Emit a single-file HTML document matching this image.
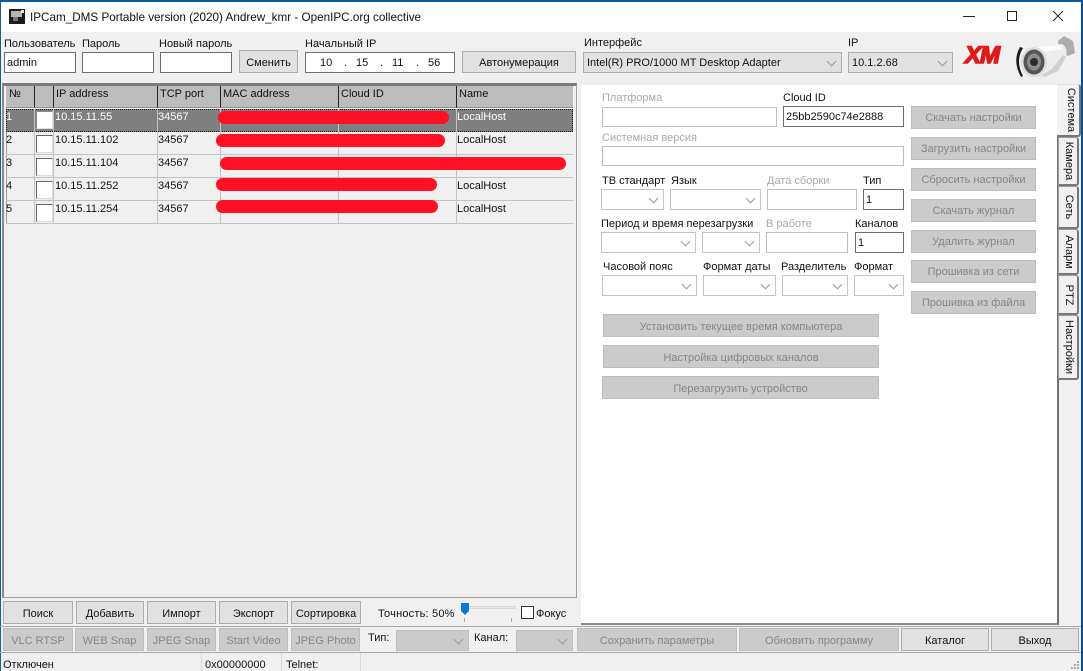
<!DOCTYPE html>
<html lang="ru"><head><meta charset="utf-8"><title>IPCam_DMS</title>
<style>
html,body{margin:0;padding:0;width:1083px;height:671px;overflow:hidden;background:#f0f0f0}
body{position:relative;font:11px/15px "Liberation Sans",sans-serif;color:#111}
div,span.a{position:absolute;box-sizing:border-box;white-space:nowrap}
.l{height:16px;padding-top:1px}
.g{color:#a9a9a9}
.i{background:#fff;border:1px solid #bdbdbd;height:22px}
.d{border-color:#6f6f6f;padding:3px 2px;line-height:14px;color:#111}
.b{background:#e1e1e1;border:1px solid #adadad;text-align:center;line-height:23px;height:23px;color:#111}
.m{line-height:25px}
.x{background:#cbcbcb;border-color:#bdbdbd;color:#858585}
.c{background:#fff;border:1px solid #c4c4c4;height:22px}
.c::after{content:"";position:absolute;right:6px;top:5px;width:6px;height:6px;border-right:1px solid #999;border-bottom:1px solid #999;transform:rotate(45deg)}
.cg{background:#e1e1e1;border-color:#adadad;padding:3px 3px;line-height:14px}
.cx{background:#cbcbcb;border-color:#bdbdbd}
.h{background:#bdbdbd;height:22px;top:86px;padding:1px 2px 0;border-right:1px solid #222;border-bottom:1px solid #8f8f8f}
.r{left:6px;width:567px;height:23px;border-bottom:1px solid #c3c3c3}
.t{height:15px}
.s{color:#fff}
.k{background:#fff;left:36px;width:17px;height:18px;border:1px solid #dcdcdc;border-top:1px solid #666;border-left:1px solid #666}
.p{background:#ff1022;border-radius:7px;height:13px}
.tab{left:1058px;width:21px;background:#f0f0f0;border:1px solid #9a9a9a;border-radius:0 3px 3px 0;border-right:2px solid #777;border-bottom:2px solid #777}
.tab span{position:absolute;left:3px;top:50%;writing-mode:vertical-rl;transform:translateY(-50%);line-height:13px;color:#111}
</style></head><body>
<!-- window frame -->
<div style="left:0;top:0;width:1083px;height:2px;background:#0d5a9a"></div>
<div style="left:0;top:2px;width:1083px;height:30px;background:#fff"></div>
<div style="left:0;top:0;width:1px;height:671px;background:#1c5f86"></div>
<div style="left:1081px;top:0;width:2px;height:671px;background:#0b4f8f"></div>
<!-- title -->
<svg style="position:absolute;left:9px;top:9px" width="16" height="15" viewBox="0 0 16 15"><rect width="16" height="15" fill="#1c1c1c"/><rect x="2" y="2" width="11" height="6" fill="#b5b5b5"/><rect x="4" y="8" width="5" height="4" fill="#777"/><rect x="12" y="1" width="3" height="3" fill="#e6e6e6"/></svg>
<div class="l" style="left:30px;top:9px;font-size:11.7px;line-height:15px;color:#111">IPCam_DMS Portable version (2020) Andrew_kmr - OpenIPC.org collective</div>
<svg style="position:absolute;left:960px;top:8px" width="115" height="16" viewBox="0 0 115 16" fill="none" stroke="#222"><path d="M3 8.5H15"/><rect x="47.5" y="3.5" width="9" height="9"/><path d="M93 3l10 10M103 3L93 13"/></svg>

<!-- top controls -->
<div class="l" style="left:4px;top:36px">Пользователь</div>
<div class="l" style="left:82px;top:36px">Пароль</div>
<div class="l" style="left:159px;top:36px">Новый пароль</div>
<div class="l" style="left:305px;top:36px">Начальный IP</div>
<div class="l" style="left:584px;top:35px">Интерфейс</div>
<div class="l" style="left:848px;top:35px">IP</div>
<div class="i d" style="left:4px;top:52px;width:72px;height:21px">admin</div>
<div class="i d" style="left:82px;top:52px;width:72px;height:21px"></div>
<div class="i d" style="left:160px;top:52px;width:72px;height:21px"></div>
<div class="b m" style="left:239px;top:50px;width:59px">Сменить</div>
<div class="i d" style="left:305px;top:52px;width:150px;height:21px"></div>
<div class="l" style="left:320px;top:55px">10</div><div class="l" style="left:344px;top:55px">.</div>
<div class="l" style="left:356px;top:55px">15</div><div class="l" style="left:380px;top:55px">.</div>
<div class="l" style="left:392px;top:55px">11</div><div class="l" style="left:416px;top:55px">.</div>
<div class="l" style="left:428px;top:55px">56</div>
<div class="b" style="left:462px;top:51px;width:114px;height:22px">Автонумерация</div>
<div class="c cg" style="left:583px;top:52px;width:259px;height:21px">Intel(R) PRO/1000 MT Desktop Adapter</div>
<div class="c cg" style="left:848px;top:52px;width:105px;height:21px">10.1.2.68</div>
<!-- logo -->
<div style="left:965px;top:44px;width:48px;height:23px;font:italic 900 24px/23px 'Liberation Sans',sans-serif;color:#e01a1a;-webkit-text-stroke:1.6px #e01a1a;letter-spacing:-1px">XM</div>
<svg style="position:absolute;left:1014px;top:33px" width="62" height="50" viewBox="0 0 62 50"><path d="M44 8l6-5 9 5 2 12-7 3-8-4z" fill="#adadad"/><path d="M18 14L48 11Q54 14 52 24L41 41Q32 47 20 45Q8 40 7 28Q8 18 18 14z" fill="#ececec"/><path d="M22 14L46 12 49 16 30 19z" fill="#fbfbfb"/><path d="M30 44L44 38 52 24 49 22 38 36 28 42z" fill="#cfcfcf"/><path d="M9 15Q1 28 9 43L7 44Q-2 28 6 14z" fill="#1d1d1d"/><ellipse cx="20" cy="29" rx="13" ry="15" fill="#dcdcdc"/><ellipse cx="20" cy="29" rx="10.500" ry="12.500" fill="#555"/><ellipse cx="20" cy="29" rx="7" ry="8.500" fill="#8d8d8d"/><circle cx="20" cy="29" r="4" fill="#2b2b2b"/></svg>

<!-- table frame -->
<div style="left:2px;top:83px;width:575px;height:515px;background:#f0f0f0;border:1px solid #a0a0a0;border-top:3px solid #7a7a7a;border-left:2px solid #8a8a8a"></div>
<div style="left:6px;top:86px;width:1px;height:137px;background:#9a9a9a"></div>
<div class="h" style="left:6px;width:29px;padding-left:3px">№</div>
<div class="h" style="left:35px;width:19px"></div>
<div class="h" style="left:54px;width:104px">IP address</div>
<div class="h" style="left:158px;width:63px">TCP port</div>
<div class="h" style="left:221px;width:118px">MAC address</div>
<div class="h" style="left:339px;width:118px">Cloud ID</div>
<div class="h" style="left:457px;width:116px;border-right:0">Name</div>
<!-- rows -->
<div class="r" style="top:109px;background:#7f7f7f;border:1px dotted #111"></div>
<div class="r" style="top:132px"></div>
<div class="r" style="top:155px"></div>
<div class="r" style="top:178px"></div>
<div class="r" style="top:201px"></div>
<div style="left:34px;top:109px;width:1px;height:115px;background:#c3c3c3"></div>
<div style="left:53px;top:109px;width:1px;height:115px;background:#c3c3c3"></div>
<div style="left:157px;top:109px;width:1px;height:115px;background:#c3c3c3"></div>
<div style="left:220px;top:109px;width:1px;height:115px;background:#c3c3c3"></div>
<div style="left:338px;top:109px;width:1px;height:115px;background:#c3c3c3"></div>
<div style="left:456px;top:109px;width:1px;height:115px;background:#c3c3c3"></div>
<div class="k" style="top:111px;border-color:#8a8a8a #e0e0e0 #e0e0e0 #8a8a8a"></div><div class="k" style="top:135px"></div><div class="k" style="top:158px"></div><div class="k" style="top:181px"></div><div class="k" style="top:204px"></div>

<div class="t s" style="left:6px;top:110px">1</div><div class="t s" style="left:55px;top:110px">10.15.11.55</div><div class="t s" style="left:158px;top:110px">34567</div><div class="t s" style="left:457px;top:110px">LocalHost</div>
<div class="t" style="left:6px;top:133px">2</div><div class="t" style="left:55px;top:133px">10.15.11.102</div><div class="t" style="left:158px;top:133px">34567</div><div class="t" style="left:457px;top:133px">LocalHost</div>
<div class="t" style="left:6px;top:156px">3</div><div class="t" style="left:55px;top:156px">10.15.11.104</div><div class="t" style="left:158px;top:156px">34567</div>
<div class="t" style="left:6px;top:179px">4</div><div class="t" style="left:55px;top:179px">10.15.11.252</div><div class="t" style="left:158px;top:179px">34567</div><div class="t" style="left:457px;top:179px">LocalHost</div>
<div class="t" style="left:6px;top:202px">5</div><div class="t" style="left:55px;top:202px">10.15.11.254</div><div class="t" style="left:158px;top:202px">34567</div><div class="t" style="left:457px;top:202px">LocalHost</div>
<div class="p" style="left:218px;top:111px;width:231px"></div>
<div class="p" style="left:216px;top:134px;width:229px"></div>
<div class="p" style="left:220px;top:157px;width:346px"></div>
<div class="p" style="left:216px;top:178px;width:221px"></div>
<div class="p" style="left:216px;top:200px;width:222px"></div>

<!-- right panel -->
<div style="left:581px;top:85px;width:478px;height:540px;background:#fff;border-right:2px solid #6f6f6f;border-bottom:2px solid #8a8a8a"></div>
<div class="l g" style="left:602px;top:90px">Платформа</div>
<div class="i" style="left:602px;top:107px;width:175px;height:20px"></div>
<div class="l" style="left:783px;top:90px">Cloud ID</div>
<div class="i d" style="left:783px;top:106px;width:121px;height:21px">25bb2590c74e2888</div>
<div class="l g" style="left:602px;top:130px">Системная версия</div>
<div class="i" style="left:602px;top:146px;width:302px;height:20px"></div>

<div class="l" style="left:602px;top:173px">ТВ стандарт</div>
<div class="l" style="left:671px;top:173px">Язык</div>
<div class="l g" style="left:767px;top:173px">Дата сборки</div>
<div class="l" style="left:863px;top:173px">Тип</div>
<div class="c" style="left:601px;top:189px;width:63px;height:21px"></div>
<div class="c" style="left:670px;top:189px;width:91px;height:21px"></div>
<div class="i" style="left:767px;top:189px;width:90px;height:21px"></div>
<div class="i d" style="left:863px;top:189px;width:41px;height:21px">1</div>

<div class="l" style="left:601px;top:216px">Период и время перезагрузки</div>
<div class="l g" style="left:766px;top:216px">В работе</div>
<div class="l" style="left:855px;top:216px">Каналов</div>
<div class="c" style="left:601px;top:232px;width:95px;height:21px"></div>
<div class="c" style="left:702px;top:232px;width:58px;height:21px"></div>
<div class="i" style="left:766px;top:232px;width:82px;height:21px"></div>
<div class="i d" style="left:855px;top:232px;width:49px;height:21px">1</div>

<div class="l" style="left:603px;top:259px">Часовой пояс</div>
<div class="l" style="left:703px;top:259px">Формат даты</div>
<div class="l" style="left:781px;top:259px">Разделитель</div>
<div class="l" style="left:854px;top:259px">Формат</div>
<div class="c" style="left:602px;top:275px;width:95px;height:21px"></div>
<div class="c" style="left:703px;top:275px;width:73px;height:21px"></div>
<div class="c" style="left:782px;top:275px;width:66px;height:21px"></div>
<div class="c" style="left:854px;top:275px;width:50px;height:21px"></div>

<div class="b x" style="left:911px;top:106px;width:125px">Скачать настройки</div>
<div class="b x" style="left:911px;top:137px;width:125px">Загрузить настройки</div>
<div class="b x" style="left:911px;top:168px;width:125px">Сбросить настройки</div>
<div class="b x" style="left:911px;top:199px;width:125px">Скачать журнал</div>
<div class="b x" style="left:911px;top:230px;width:125px">Удалить журнал</div>
<div class="b x" style="left:911px;top:260px;width:125px">Прошивка из сети</div>
<div class="b x" style="left:911px;top:291px;width:125px">Прошивка из файла</div>
<div class="b x m" style="left:603px;top:314px;width:276px">Установить текущее время компьютера</div>
<div class="b x m" style="left:603px;top:345px;width:276px">Настройка цифровых каналов</div>
<div class="b x m" style="left:602px;top:376px;width:277px">Перезагрузить устройство</div>

<!-- tabs -->
<div class="tab" style="top:137px;height:49px"><span>Камера</span></div>
<div class="tab" style="top:186px;height:43px"><span>Сеть</span></div>
<div class="tab" style="top:229px;height:46px"><span>Аларм</span></div>
<div class="tab" style="top:275px;height:40px"><span>PTZ</span></div>
<div class="tab" style="top:315px;height:65px"><span>Настройки</span></div>
<div class="tab" style="top:84px;height:53px;left:1057px;width:24px;background:#f4f4f4;border-left:0;border-top:1px solid #ddd"><span style="left:7px">Система</span></div>

<!-- bottom row 1 -->
<div class="b m" style="left:3px;top:601px;width:70px">Поиск</div>
<div class="b m" style="left:76px;top:601px;width:68px">Добавить</div>
<div class="b m" style="left:147px;top:601px;width:69px">Импорт</div>
<div class="b m" style="left:219px;top:601px;width:69px">Экспорт</div>
<div class="b m" style="left:291px;top:601px;width:70px">Сортировка</div>
<div class="l" style="left:378px;top:606px;letter-spacing:.2px">Точность: 50%</div>
<div style="left:462px;top:606px;width:54px;height:3px;background:#e7eae7;border:1px solid #d6d6d6"></div>
<svg style="position:absolute;left:461px;top:603px" width="9" height="12"><path d="M0 0H8V8L4 12 0 8z" fill="#0a78d7"/></svg>
<div style="left:464px;top:618px;width:1px;height:4px;background:#aaa"></div>
<div style="left:511px;top:618px;width:1px;height:4px;background:#aaa"></div>
<div style="left:521px;top:606px;width:13px;height:13px;background:#fff;border:1px solid #333"></div>
<div class="l" style="left:536px;top:606px">Фокус</div>
<div style="left:0;top:626px;width:1081px;height:1px;background:#a8a8a8"></div>

<!-- bottom row 2 -->
<div class="b x m" style="left:3px;top:628px;width:70px">VLC RTSP</div>
<div class="b x m" style="left:75px;top:628px;width:69px">WEB Snap</div>
<div class="b x m" style="left:147px;top:628px;width:69px">JPEG Snap</div>
<div class="b x m" style="left:219px;top:628px;width:69px">Start Video</div>
<div class="b x m" style="left:291px;top:628px;width:69px">JPEG Photo</div>
<div class="l" style="left:368px;top:630px">Тип:</div>
<div class="c cx" style="left:396px;top:630px;width:73px;height:21px"></div>
<div class="l" style="left:474px;top:630px">Канал:</div>
<div class="c cx" style="left:516px;top:630px;width:57px;height:21px"></div>
<div class="b x m" style="left:577px;top:628px;width:160px">Сохранить параметры</div>
<div class="b x m" style="left:739px;top:628px;width:160px">Обновить программу</div>
<div class="b m" style="left:901px;top:628px;width:88px">Каталог</div>
<div class="b m" style="left:991px;top:628px;width:88px">Выход</div>
<div style="left:0;top:652px;width:1081px;height:1px;background:#a8a8a8"></div>

<!-- status -->
<div class="l" style="left:3px;top:657px">Отключен</div>
<div style="left:201px;top:653px;width:1px;height:18px;background:#d8d8d8"></div>
<div class="l" style="left:205px;top:657px">0x00000000</div>
<div style="left:281px;top:653px;width:1px;height:18px;background:#d8d8d8"></div>
<div class="l" style="left:286px;top:657px">Telnet:</div>
<div style="left:360px;top:653px;width:1px;height:18px;background:#d8d8d8"></div>
<svg style="position:absolute;left:1070px;top:660px" width="10" height="10" fill="#a8a8a8"><rect x="7" y="1" width="2" height="2"/><rect x="4" y="4" width="2" height="2"/><rect x="7" y="4" width="2" height="2"/><rect x="1" y="7" width="2" height="2"/><rect x="4" y="7" width="2" height="2"/><rect x="7" y="7" width="2" height="2"/></svg>
</body></html>
